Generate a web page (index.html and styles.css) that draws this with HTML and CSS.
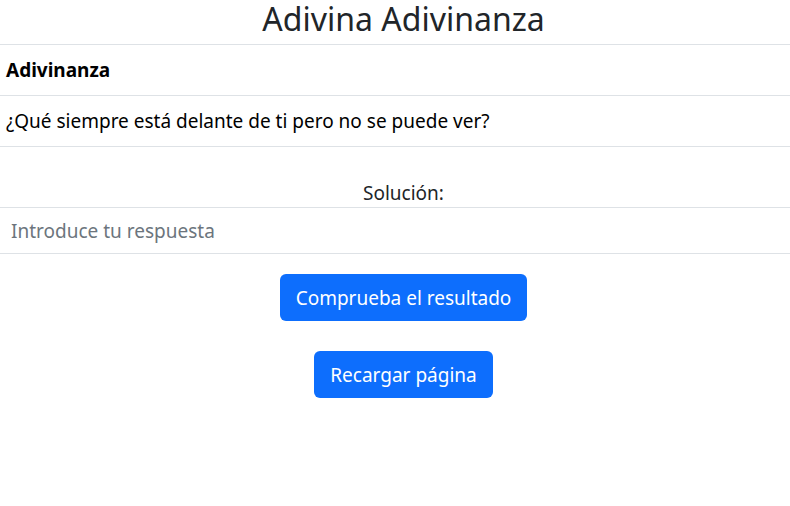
FILE: index.html
```html
<!DOCTYPE html>
<html lang="es">
<head>
<meta charset="utf-8">
<title>Adivina Adivinanza</title>
<link rel="stylesheet" href="styles.css">
</head>
<body>
<div class="page">
  <h1 class="title">Adivina Adivinanza</h1>
  <ul class="list">
    <li class="item item-head">Adivinanza</li>
    <li class="item">¿Qué siempre está delante de ti pero no se puede ver?</li>
  </ul>
  <label class="label" for="resp">Solución:</label>
  <input id="resp" class="answer" type="text" placeholder="Introduce tu respuesta">
  <div class="actions">
    <button class="btn" type="button">Comprueba el resultado</button>
    <button class="btn" type="button">Recargar página</button>
  </div>
</div>
</body>
</html>
```
FILE: styles.css
```css
* { box-sizing: border-box; }
html, body { margin: 0; padding: 0; background: #fff; }
body {
  font-family: "Noto Sans", "Open Sans", sans-serif;
  color: #212529;
  font-size: 19px;
}
.page { width: 100%; }
.title {
  margin: 0;
  height: 44px;
  padding-left: 17px;
  font-size: 32px;
  font-weight: 400;
  line-height: 38px;
  text-align: center;
}
.list {
  list-style: none;
  margin: 0;
  padding: 0;
  border-top: 1px solid #dee2e6;
}
.item {
  height: 51px;
  display: flex;
  align-items: center;
  padding: 0 6px;
  border-bottom: 1px solid #dee2e6;
  font-size: 19px;
  color: #000;
}
.item-head { font-weight: 700; }
.label {
  display: block;
  text-align: center;
  font-size: 19px;
  padding-top: 33px;
  padding-left: 17px;
  height: 60px;
  line-height: 27px;
}
.answer {
  display: block;
  width: 100%;
  height: 47px;
  margin: 0;
  border: none;
  border-top: 1px solid #dee2e6;
  border-bottom: 1px solid #dee2e6;
  padding: 0 11px;
  font-family: inherit;
  font-size: 19px;
  color: #212529;
  outline: none;
}
.answer::placeholder { color: #6c757d; opacity: 1; }
.actions {
  display: flex;
  flex-direction: column;
  align-items: center;
  gap: 30px;
  padding-top: 20px;
  padding-left: 17px;
}
.btn {
  height: 47px;
  padding: 0 16px;
  border: none;
  border-radius: 6px;
  background: #0d6efd;
  color: #fff;
  font-family: inherit;
  font-size: 19px;
  cursor: pointer;
}
```
